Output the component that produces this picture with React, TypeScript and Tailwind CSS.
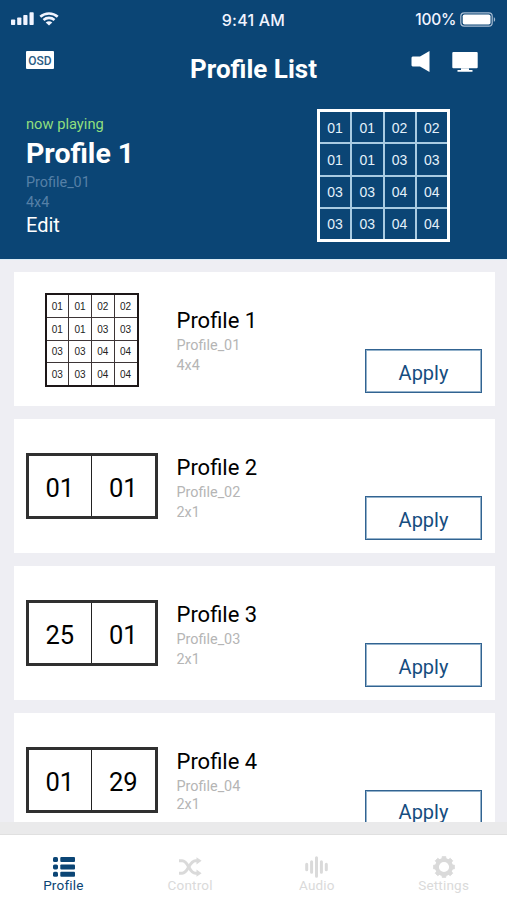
import { clsx } from 'clsx';

type Profile = {
  name: string;
  file: string;
  size: string;
  cells: string[];
};

const quad = ['01', '01', '02', '02', '01', '01', '03', '03', '03', '03', '04', '04', '03', '03', '04', '04'];

const profiles: Profile[] = [
  { name: 'Profile 1', file: 'Profile_01', size: '4x4', cells: quad },
  { name: 'Profile 2', file: 'Profile_02', size: '2x1', cells: ['01', '01'] },
  { name: 'Profile 3', file: 'Profile_03', size: '2x1', cells: ['25', '01'] },
  { name: 'Profile 4', file: 'Profile_04', size: '2x1', cells: ['01', '29'] },
];

function StatusBar() {
  return (
    <div className="grid h-[38px] grid-cols-3 items-center px-[11px] font-[Inter] text-[15.5px] font-medium leading-none text-[#f1f4ff]">
      <div className="flex items-center gap-[5px]">
        <svg width="23" height="14" viewBox="0 0 23 14" fill="currentColor">
          <rect x="0" y="7.5" width="4.2" height="5.5" rx="0.7" />
          <rect x="6.2" y="5.5" width="4.2" height="7.5" rx="0.7" />
          <rect x="12.3" y="3" width="4.2" height="10" rx="0.7" />
          <rect x="18.5" y="0.3" width="4.2" height="12.7" rx="0.7" />
        </svg>
        <svg width="20" height="14" viewBox="0 0 20 14" fill="none" stroke="currentColor" strokeWidth="2.6">
          <path d="M1.3 4.8C6.2 .3 13.8 .3 18.7 4.8" />
          <path d="M4.5 8C7.7 5.2 12.3 5.2 15.5 8" />
          <path d="M10 13.4L6.7 10.4C8.7 8.7 11.3 8.7 13.3 10.4Z" fill="currentColor" stroke="none" />
        </svg>
      </div>
      <span className="pt-[2px] text-center text-[16px] tracking-[0.2px]">9:41 AM</span>
      <div className="flex items-center justify-end gap-1">
        <span className="pt-[2px] tracking-[-0.3px]">100%</span>
        <svg width="36" height="15" viewBox="0 0 36 15" fill="none">
          <rect x="0.8" y="0.8" width="31.4" height="13.4" rx="3.4" stroke="#a9bdd3" strokeWidth="1.2" />
          <rect x="2.7" y="2.5" width="27.8" height="10" rx="1.8" fill="#fff" />
          <path d="M33.8 5.2c1.8.6 1.8 4 0 4.6z" fill="#a9bdd3" />
        </svg>
      </div>
    </div>
  );
}

function HeaderGrid() {
  return (
    <div className="grid h-[133px] w-[133px] grid-cols-4 gap-[2px] border-[3px] border-white bg-[#a9cbe2] font-['Liberation_Sans',sans-serif] text-[14px] leading-none text-[#e4f1fb]">
      {quad.map((cell, i) => (
        <div key={i} className="flex items-center justify-center bg-[#0b4575] pt-px">{cell}</div>
      ))}
    </div>
  );
}

function Thumbnail({ cells }: { cells: string[] }) {
  if (cells.length === 16) {
    return (
      <div className="mt-[21px] grid h-[94px] w-[94px] grid-cols-4 gap-px border-2 border-[#1d1718] bg-[#3d3536] font-['Liberation_Sans',sans-serif] text-[10px] leading-none text-[#222]">
        {cells.map((cell, i) => (
          <div key={i} className="flex items-center justify-center bg-white pt-0.5">{cell}</div>
        ))}
      </div>
    );
  }
  return (
    <div className="mt-[34px] grid h-[66px] w-[132px] grid-cols-2 gap-px border-[3px] border-[#303030] bg-[#222] text-[25.5px] leading-none text-black">
      {cells.map((cell, i) => (
        <div key={i} className="flex items-center justify-center bg-white pt-[5px]">{cell}</div>
      ))}
    </div>
  );
}

function ProfileCard({ profile, last }: { profile: Profile; last: boolean }) {
  return (
    <div className="flex h-[134px] shrink-0 bg-white pl-[11px] pr-[13px]">
      <div className="flex w-[133px] items-start justify-center">
        <Thumbnail cells={profile.cells} />
      </div>
      <div className="ml-[18.5px] flex-1 pt-[35px]">
        <h2 className="text-[22px] leading-[28px] text-black">{profile.name}</h2>
        <p className="pt-px text-[14.4px] leading-[20px] text-[#b5b5b5]">{profile.file}</p>
        <p className={clsx('text-[14.4px] text-[#b5b5b5]', last ? 'leading-[16px]' : 'leading-[20px]')}>{profile.size}</p>
      </div>
      <button
        className={clsx(
          'mt-[77px] h-11 w-[117px] border border-[#316391] text-[20px] leading-none text-[#164d7f] shadow-[inset_0_0_0_1px_#94b2cb]',
          last ? 'pb-px' : 'pt-[3px]',
        )}
      >
        Apply
      </button>
    </div>
  );
}

function ListIcon() {
  return (
    <svg className="ml-px" width="22" height="20" viewBox="0 0 22 20" fill="currentColor">
      {[0, 7.4, 14.8].map((y) => (
        <g key={y}>
          <rect x="0" y={y} width="5" height="5" rx="1.6" />
          <rect x="7.3" y={y} width="14.7" height="5" rx="1" />
        </g>
      ))}
    </svg>
  );
}

function ShuffleIcon() {
  return (
    <svg width="23" height="20" viewBox="0 0 23 20" fill="none" stroke="currentColor" strokeWidth="3">
      <path d="M0 3.8H3.2C9.5 3.8 10 16.2 16.5 16.2H18.5" />
      <path d="M0 16.2H3.2C9.5 16.2 10 3.8 16.5 3.8H18.5" />
      <path d="M17.5 .2L22.6 3.8L17.5 7.4ZM17.5 12.6L22.6 16.2L17.5 19.8Z" fill="currentColor" stroke="none" />
    </svg>
  );
}

function AudioIcon() {
  return (
    <svg width="23" height="22" viewBox="0 0 23 22" stroke="currentColor" strokeWidth="3" strokeLinecap="round">
      <path d="M1.7 8.3V13.7M6.6 5.8V16.2M11.5 1.7V20.3M16.4 5.8V16.2M21.3 8.3V13.7" />
    </svg>
  );
}

function GearIcon() {
  return (
    <svg width="22" height="22" viewBox="0 0 22 22" fill="none" stroke="currentColor">
      <circle cx="11" cy="11" r="7.1" strokeWidth="4" />
      {[0, 45, 90, 135, 180, 225, 270, 315].map((a) => (
        <path key={a} d="M8.8 3L9.3 .4H12.7L13.2 3Z" fill="currentColor" strokeWidth="0.8" strokeLinejoin="round" transform={`rotate(${a} 11 11)`} />
      ))}
    </svg>
  );
}

const tabs = [
  { label: 'Profile', icon: ListIcon },
  { label: 'Control', icon: ShuffleIcon },
  { label: 'Audio', icon: AudioIcon },
  { label: 'Settings', icon: GearIcon },
];

export default function App() {
  return (
    <div className="flex h-[900px] w-[507px] flex-col overflow-hidden bg-[#eeeef3] font-[Roboto,sans-serif]">
      <header className="h-[259px] shrink-0 bg-[#0b4575] text-white">
        <StatusBar />
        <div className="grid h-[71px] grid-cols-[1fr_auto_1fr] pl-[29px] pr-[29px]">
          <div className="-ml-[3px] mt-[13px] flex h-[18px] w-7 items-center justify-center rounded-[1px] bg-white pt-px text-[12px] font-medium leading-none text-[#2b5c85]">
            OSD
          </div>
          <h1 className="mt-[15px] text-[26px] font-bold leading-[32px]">Profile List</h1>
          <div className="mt-[13px] flex items-start justify-end gap-[22px]">
            <svg width="19" height="22" viewBox="0 0 19 22" fill="currentColor">
              <path d="M1.5 5.5H9L18.5 0V21L9 15.5H1.5L.5 14.5V6.5Z" />
            </svg>
            <svg width="26" height="22" viewBox="0 0 26 22" fill="currentColor">
              <rect x="0.3" y="1" width="25.4" height="16.3" rx="1" />
              <path d="M9 17.3H17V19H20.5V20.8H5.5V19H9Z" />
            </svg>
          </div>
        </div>
        <div className="flex justify-between pl-[26px] pr-[57px]">
          <div className="pt-[5px]">
            <p className="text-[14.7px] leading-[20px] text-[#90df7e]">now playing</p>
            <p className="pt-px text-[28.5px] font-bold leading-[37px]">Profile 1</p>
            <p className="pt-px text-[14.4px] leading-[20px] text-[#5680a7]">Profile_01</p>
            <p className="text-[14.4px] leading-[20px] text-[#5680a7]">4x4</p>
            <p className="text-[20px] leading-[25px]">Edit</p>
          </div>
          <HeaderGrid />
        </div>
      </header>

      <main className="flex h-[563px] shrink-0 flex-col gap-[13px] overflow-hidden border-t border-[#dcecf6] pl-3.5 pr-3 pt-3">
        {profiles.map((profile, i) => (
          <ProfileCard key={profile.name} profile={profile} last={i === profiles.length - 1} />
        ))}
      </main>
      <div className="h-3 shrink-0 bg-[#eaeaeb]" />

      <nav className="grid flex-1 grid-cols-4 border-t border-[#e0e0e0] bg-white">
        {tabs.map(({ label, icon: Icon }, i) => (
          <button
            key={label}
            className={clsx('flex flex-col items-center pt-[21px]', i === 0 ? 'text-[#0b4575]' : 'text-[#dadada]')}
          >
            <span className="flex h-[22px] items-center">
              <Icon />
            </span>
            <span className="text-[13.5px] leading-[14px] tracking-[0.2px]">{label}</span>
          </button>
        ))}
      </nav>
    </div>
  );
}
